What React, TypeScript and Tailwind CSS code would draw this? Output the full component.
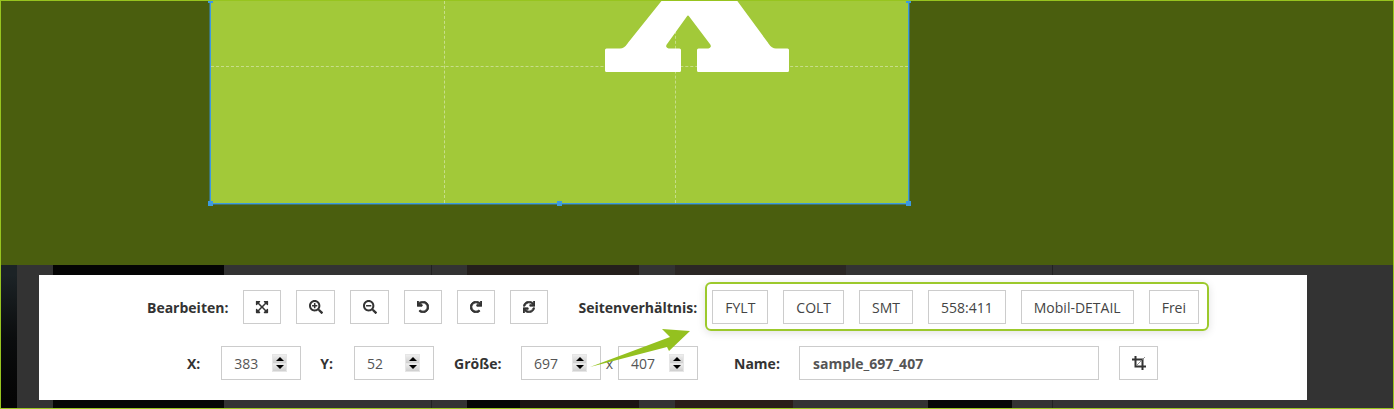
import { FaExpandArrowsAlt, FaRedo, FaSearchMinus, FaSearchPlus, FaSync, FaUndo } from "react-icons/fa";
import type { ReactNode } from "react";

const btn = "h-[34px] px-3 flex items-center justify-center border border-[#ccc] bg-white text-[14px] text-[#444] shrink-0";
const iconBtn = "h-[34px] flex items-center justify-center border border-[#ccc] bg-white text-[#333] shrink-0";
const lbl = "text-[14px] font-bold text-[#333] shrink-0";

const topTiles = [
    ["w-4", "bg-[#1c2326]"], ["w-9", "bg-[#333]"], ["w-[171px]", "bg-[#040404]"], ["w-[207px]", "bg-[#333]"],
    ["w-px", "bg-[#222]"], ["w-[35px]", "bg-[#333]"], ["w-[172px]", "bg-[#241f1c]"], ["w-9", "bg-[#333]"],
    ["w-[171px]", "bg-[#2b2725]"], ["w-[206px]", "bg-[#333]"], ["w-px", "bg-[#222]"], ["flex-1", "bg-[#333]"],
];
const bottomTiles = [
    ["w-4", "bg-[#050505]"], ["w-9", "bg-[#333]"], ["w-[171px]", "bg-[#060606]"], ["w-[207px]", "bg-[#333]"],
    ["w-px", "bg-[#222]"], ["w-[35px]", "bg-[#333]"], ["w-[53px]", "bg-[#050505]"], ["w-[119px]", "bg-[#1c1412]"],
    ["w-9", "bg-[#333]"], ["w-[118px]", "bg-[#2a1c18]"], ["w-[135px]", "bg-[#333]"], ["w-[84px]", "bg-[#070707]"],
    ["w-[40px]", "bg-[#333]"], ["w-px", "bg-[#222]"], ["flex-1", "bg-[#333]"],
];

function Btn({ children }: { children: ReactNode }) {
    return <button className={btn}>{children}</button>;
}

function NumberBox({ value, className = "" }: { value: number; className?: string }) {
    return (
        <div className={`h-[34px] w-20 pl-3 pr-[13px] flex items-center border border-[#ccc] bg-white shrink-0 ${className}`}>
            <span className="flex-1 text-[14px] text-[#555]">{value}</span>
            <div className="w-[15px] h-[18px] flex flex-col gap-px p-px bg-[#e6e6e6]">
                <div className="flex-1 flex items-center justify-center bg-gradient-to-b from-[#eee] to-[#cfcfcf]">
                    <span className="w-0 h-0 border-x-[4px] border-x-transparent border-b-[4px] border-b-black" />
                </div>
                <div className="flex-1 flex items-center justify-center bg-gradient-to-b from-[#eee] to-[#cfcfcf]">
                    <span className="w-0 h-0 border-x-[4px] border-x-transparent border-t-[4px] border-t-black" />
                </div>
            </div>
        </div>
    );
}

function Strip({ tiles, h }: { tiles: string[][]; h: string }) {
    return (
        <div className={`flex ${h}`}>
            {tiles.map(([w, c], i) => <div key={i} className={`${w} ${c}`} />)}
        </div>
    );
}

function Handle({ cls }: { cls: string }) {
    return <span className={`absolute w-[5px] h-[5px] bg-[#3c9ae0] ${cls}`} />;
}

function CropIcon() {
    return (
        <svg width="14" height="14" viewBox="0 0 14 14" fill="none">
            <path d="M3.5 0V10.5H14M0 3.5H10.5V14" stroke="#333" strokeWidth="2" />
            <path d="M4.5 9.5L13 1" stroke="#777" strokeWidth="0.8" />
        </svg>
    );
}

function CropBox() {
    return (
        <div className="relative ml-[209px] w-[699px] h-[203px] border-x border-b border-[#3c9ae0] bg-[#a2c939] shadow-[0_0_0_1px_rgba(51,153,255,0.4)]">
            <svg className="absolute left-[393px] top-0" width="186" height="72" viewBox="604 0 186 72">
                <path
                    d="M665 -2 L734 -2 L767 43 Q771 49 776 49 L787.5 49 L787.5 69.5 L698.5 69.5 L698.5 49 L709 49 Q714 47 711.5 42.5 L690 14 Q688 12 686 14 L665.5 42.5 Q663 47 668 49 L679.5 49 L679.5 69.5 L606.5 69.5 L606.5 49 L620 49 Q625 49 629 43 Z"
                    fill="#fff"
                    stroke="#fff"
                    strokeWidth="3"
                    strokeLinejoin="round"
                />
            </svg>
            <span className="absolute left-0 right-0 top-[65px] border-t border-dashed border-white/40" />
            <span className="absolute top-0 bottom-0 left-[233px] border-l border-dashed border-white/40" />
            <span className="absolute top-0 bottom-0 left-[464px] border-l border-dashed border-white/40" />
            <Handle cls="-left-[3px] -bottom-[3px]" />
            <Handle cls="left-[346px] -bottom-[3px]" />
            <Handle cls="-right-[3px] -bottom-[3px]" />
            <Handle cls="-left-[3px] -top-[3px]" />
            <Handle cls="-right-[3px] -top-[3px]" />
        </div>
    );
}

export default function App() {
    return (
        <div className="relative h-[409px] w-[1394px] overflow-hidden border border-[#97c41f] bg-[#333] font-['Open_Sans',sans-serif]">
            <div className="h-[264px] bg-[#4a5e0e]">
                <CropBox />
            </div>
            <Strip tiles={topTiles} h="h-[10px]" />
            <div className="flex h-[125px]">
                <div className="w-4 bg-gradient-to-b from-[#1c2326] via-[#0b0d0e] to-[#050505]" />
                <div className="w-[22px] bg-[#333]" />
                <div className="relative w-[1268px] bg-white pt-[15px] flex flex-col items-center gap-[22px]">
                    <div className="flex items-center gap-[15px]">
                        <span className={lbl}>Bearbeiten:</span>
                        <button className={`${iconBtn} w-[38px]`}><FaExpandArrowsAlt size={14} /></button>
                        <button className={`${iconBtn} w-[39px]`}><FaSearchPlus size={14} /></button>
                        <button className={`${iconBtn} w-[39px]`}><FaSearchMinus size={14} /></button>
                        <button className={`${iconBtn} w-[38px]`}><FaUndo size={12} stroke="currentColor" strokeWidth={36} /></button>
                        <button className={`${iconBtn} w-[38px]`}><FaRedo size={12} stroke="currentColor" strokeWidth={36} /></button>
                        <button className={`${iconBtn} w-[38px]`}><FaSync size={12} stroke="currentColor" strokeWidth={30} /></button>
                        <span className={`${lbl} ml-[15px]`}>Seitenverhältnis:</span>
                        {["FYLT", "COLT", "SMT", "558:411", "Mobil-DETAIL", "Frei"].map((t) => <Btn key={t}>{t}</Btn>)}
                    </div>
                    <div className="flex items-center gap-5">
                        <span className={lbl}>X:</span>
                        <NumberBox value={383} className="ml-px" />
                        <span className={`${lbl} -ml-px`}>Y:</span>
                        <NumberBox value={52} className="ml-px" />
                        <span className={`${lbl} w-[47px]`}>Größe:</span>
                        <div className="flex items-center">
                            <NumberBox value={697} />
                            <span className="w-[17px] text-center text-[14px] text-[#555]">x</span>
                            <NumberBox value={407} />
                        </div>
                        <span className={`${lbl} ml-4 w-[45px]`}>Name:</span>
                        <input defaultValue="sample_697_407" className="h-[34px] w-[300px] px-[13px] border border-[#ccc] text-[14px] font-bold text-[#555] outline-none" />
                        <button className={`${iconBtn} w-[39px] mr-px`}><CropIcon /></button>
                    </div>
                    {/* green highlight + arrow drawn on top of the screenshot */}
                    <div className="absolute left-[666px] top-[7px] w-[504px] h-[49px] rounded-md border-2 border-[#9cc92c] shadow-[0_2px_8px_rgba(0,0,0,0.12)]" />
                    <svg className="absolute left-[551px] top-[50px]" width="110" height="50" viewBox="590 325 110 50">
                        <path d="M590 367 L670 337 L662 329 L690 331 L669 351 L667 347 Z" fill="#94c11f" />
                    </svg>
                </div>
                <div className="flex-1 bg-[#333]" />
            </div>
            <Strip tiles={bottomTiles} h="h-[8px]" />
        </div>
    );
}
